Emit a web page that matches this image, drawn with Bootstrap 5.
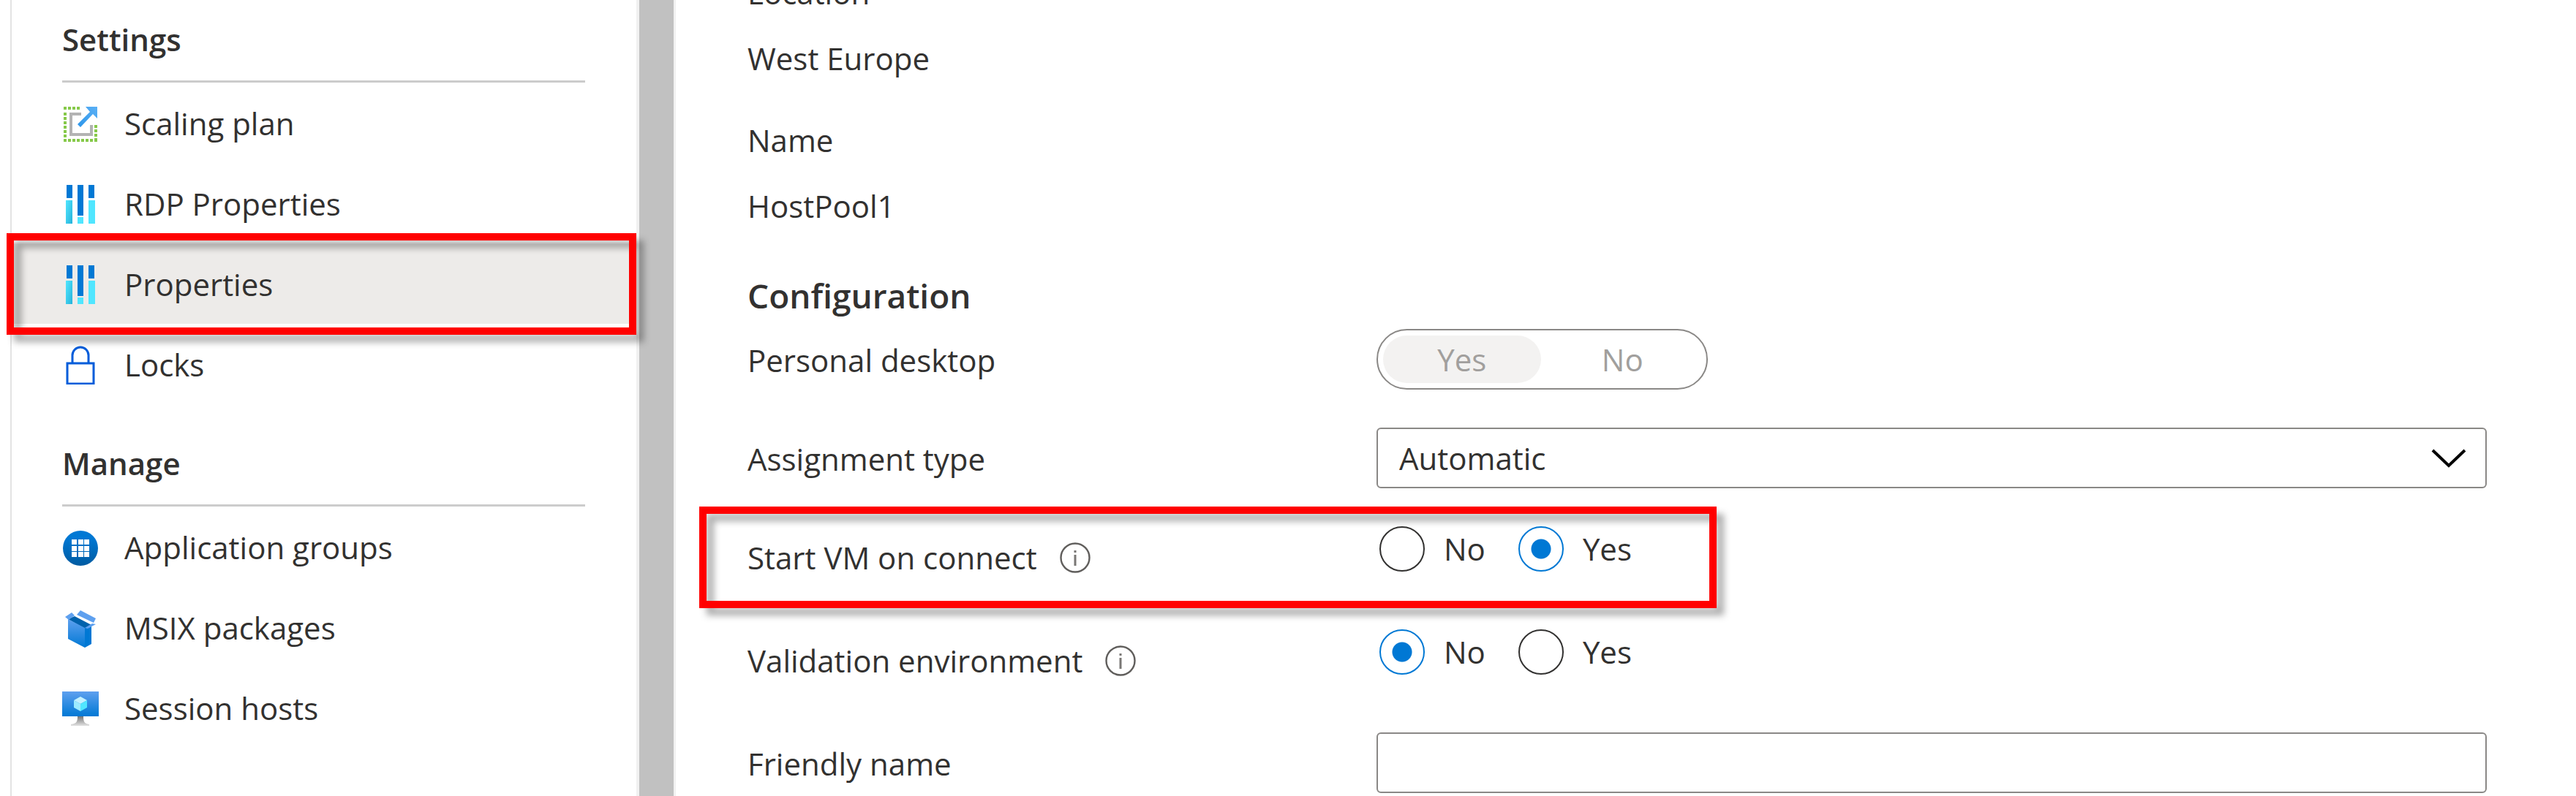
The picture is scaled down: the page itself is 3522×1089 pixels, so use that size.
<!DOCTYPE html>
<html lang="en">
<head>
<meta charset="utf-8">
<meta name="viewport" content="width=device-width, initial-scale=1">
<title>HostPool1 | Properties</title>
<link href="https://cdn.jsdelivr.net/npm/bootstrap@5.3.0/dist/css/bootstrap.min.css" rel="stylesheet">
<style>
  body { font-family: "Open Sans", "Noto Sans", sans-serif; font-size: 42px; line-height: 60px; color: #323130; background: #fff; }

  /* resource menu */
  .side-menu { width: 860px; margin-left: 14px; padding-top: 24px; border-left: 2px solid #e3e3e3; border-right: 4px solid #f1f1f1; }
  .menu-title { font-size: 42px; line-height: 60px; font-weight: 600; margin: 0 70px 0 69px; padding-bottom: 26px; border-bottom: 3px solid #ccc; }
  .menu-group + .menu-group { margin-top: 51px; }
  .side-menu .nav-link { height: 110px; padding: 2px 67px 0; gap: 33px; color: #323130; }
  .side-menu .nav-link.active { background: #edebe9; }
  .menu-icon { width: 54px; height: 54px; }
  .scroll-thumb { width: 50px; background: #c1c1c1; border-right: 3px solid #f1f1f1; }

  /* property sheet */
  .sheet { margin-top: -40px; padding: 0 122px 0 98px; }
  .essentials { margin: 0; }
  .essentials dt { font-weight: 400; margin-bottom: 30px; }
  .essentials dd { margin-bottom: 52px; }
  .sheet-title { font-size: 46px; line-height: 60px; font-weight: 600; margin: 62px 0 16px; }
  .prop-row { min-height: 83px; margin-bottom: 52px; }
  .prop-row.choice-row { min-height: 89px; }
  .prop-name { width: 860px; padding-top: 13px; gap: 31px; }
  .info-icon { width: 42px; height: 42px; }

  .pill-toggle { width: 453px; height: 83px; padding: 7px; gap: 4px; border: 2px solid #8a8886; border-radius: 42px; }
  .pill-toggle .btn { flex: 1; padding: 0; border: 0; border-radius: 33px; font-size: 42px; line-height: 60px; color: #a19f9d; opacity: 1; }
  .pill-toggle .btn.active { background: #f3f2f1; color: #a19f9d; }

  .sheet .form-control, .sheet .form-select { height: 83px; padding: 0 29px; border: 2px solid #8a8886; border-radius: 6px; font-size: 42px; line-height: 60px; color: #323130; background-color: #fff; }
  .sheet .form-select { background-image: url("data:image/svg+xml,%3Csvg xmlns='http://www.w3.org/2000/svg' viewBox='0 0 48 28'%3E%3Cpath d='M2 3l22 21L46 3' fill='none' stroke='%23000' stroke-width='4'/%3E%3C/svg%3E"); background-size: 48px 28px; background-position: right 26px center; }

  .choice-list { padding-left: 4px; gap: 45px; }
  .choice-list .form-check { min-height: 62px; padding: 0; margin: 0; gap: 26px; }
  .choice-list .form-check-input { width: 62px; height: 62px; margin: 0; border: 2px solid #323130; background: #fff; }
  .choice-list .form-check-input:checked { border-color: #0078d4; background: radial-gradient(circle, #0078d4 13px, #fff 14px); }

  /* call-out frames drawn over the page */
  .callout { position: absolute; z-index: 2; border: 10px solid #f00; filter: drop-shadow(10px 10px 5px rgba(0, 0, 0, .32)); pointer-events: none; }
  .callout-menu { inset: -14px 0 -15px -7px; }
  .callout-row { top: -27px; bottom: -23px; left: -66px; width: 1391px; }
</style>
</head>
<body>
<svg width="0" height="0" class="position-absolute" aria-hidden="true">
  <defs>
    <linearGradient id="cyan" x1="0" y1="0" x2="1" y2="1"><stop offset="0" stop-color="#50e6ff"/><stop offset="1" stop-color="#27b3da"/></linearGradient>
    <linearGradient id="disc" x1="0" y1="0" x2="0" y2="1"><stop offset="0.2" stop-color="#0078d4"/><stop offset="1" stop-color="#005ba1"/></linearGradient>
    <linearGradient id="face" x1="0" y1="0" x2="0" y2="1"><stop offset="0" stop-color="#5ea0ef"/><stop offset="1" stop-color="#0078d4"/></linearGradient>
    <linearGradient id="stand" x1="0" y1="0" x2="0" y2="1"><stop offset="0" stop-color="#767676"/><stop offset="1" stop-color="#e2e2e2"/></linearGradient>
    <linearGradient id="shaft" x1="0" y1="1" x2="1" y2="0"><stop offset="0" stop-color="#2b95ea"/><stop offset="1" stop-color="#5bb0f5"/></linearGradient>
    <symbol id="sliders" viewBox="0 0 54 54">
      <path fill="#0078d4" d="M8 1h8v18H8zM23 1h8v42h-8zM38 1h8v18h-8z"/>
      <path fill="url(#cyan)" d="M7 22h9v32H7z"/>
      <path fill="#50e6ff" d="M23 45h8v9h-8zM38 22h9v32h-9z"/>
    </symbol>
    <symbol id="info" viewBox="0 0 42 42">
      <circle cx="21" cy="21" r="19.5" fill="none" stroke="#605e5c" stroke-width="2.4"/>
      <path d="M21 17v15M21 11v3" stroke="#797775" stroke-width="3"/>
    </symbol>
  </defs>
</svg>

<div class="d-flex vh-100 overflow-hidden">
  <aside class="side-menu flex-shrink-0">
    <section class="menu-group">
      <h2 class="menu-title">Settings</h2>
      <nav class="nav flex-column" aria-label="Settings">
        <a class="nav-link d-flex align-items-center" href="#">
          <svg class="menu-icon" viewBox="0 0 54 54" aria-hidden="true">
            <path d="M4 6h23M6 12v40M4 50h46M48 29v20" fill="none" stroke="#86c94a" stroke-width="4" stroke-dasharray="4 2"/>
            <path d="M28 14H14v28h28V29" fill="none" stroke="#b3b3b3" stroke-width="4"/>
            <path d="M23 28L40 11 34 4h16v16l-6-6-17 18z" fill="url(#shaft)"/>
          </svg>Scaling plan</a>
        <a class="nav-link d-flex align-items-center" href="#">
          <svg class="menu-icon" aria-hidden="true"><use href="#sliders"/></svg>RDP Properties</a>
        <div class="position-relative">
          <a class="nav-link active d-flex align-items-center" href="#" aria-current="page">
            <svg class="menu-icon" aria-hidden="true"><use href="#sliders"/></svg>Properties</a>
          <div class="callout callout-menu"></div>
        </div>
        <a class="nav-link d-flex align-items-center" href="#">
          <svg class="menu-icon" viewBox="0 0 54 54" aria-hidden="true">
            <path d="M9 25h36v28H9zM16 25V14a11 11 0 0 1 22 0v11" fill="none" stroke="#015cda" stroke-width="3"/>
          </svg>Locks</a>
      </nav>
    </section>
    <section class="menu-group">
      <h2 class="menu-title">Manage</h2>
      <nav class="nav flex-column" aria-label="Manage">
        <a class="nav-link d-flex align-items-center" href="#">
          <svg class="menu-icon" viewBox="0 0 54 54" aria-hidden="true">
            <circle cx="27" cy="28" r="24" fill="url(#disc)"/>
            <path fill="#fff" d="M15 16h7v7h-7zM24 16h7v7h-7zM32 16h7v7h-7zM15 25h7v7h-7zM24 25h7v7h-7zM32 25h7v7h-7zM15 33h7v7h-7zM24 33h7v7h-7zM32 33h7v7h-7z"/>
          </svg>Application groups</a>
        <a class="nav-link d-flex align-items-center" href="#">
          <svg class="menu-icon" viewBox="0 0 54 54" aria-hidden="true">
            <path fill="#0062ad" d="M10 15l9-4 23 12-9 5z"/>
            <path fill="#5ea0ef" d="M27 3l21 11-3 6-23-11zM6 12l9-6 4 4-8 6z"/>
            <path fill="url(#face)" d="M10 15l23 12v27L10 42z"/>
            <path fill="#0078d4" d="M33 27l9-4v26l-9 5z"/>
            <path fill="#5ea0ef" d="M33 27l4 1 11-6-5-1z"/>
          </svg>MSIX packages</a>
        <a class="nav-link d-flex align-items-center" href="#">
          <svg class="menu-icon" viewBox="0 0 54 54" aria-hidden="true">
            <path fill="url(#stand)" d="M23 38h8c0 7 1 10 8 11v2H14v-2c8-1 9-4 9-11z"/>
            <rect x="2" y="4" width="50" height="34" fill="url(#face)"/>
            <path fill="#c3f1ff" d="M27 11l9 5-9 5-9-5z"/>
            <path fill="#9cebff" d="M18 16l9 5v10l-9-5z"/>
            <path fill="#50e6ff" d="M36 16l-9 5v10l9-5z"/>
          </svg>Session hosts</a>
      </nav>
    </section>
  </aside>
  <div class="scroll-thumb flex-shrink-0"></div>

  <main class="sheet flex-grow-1">
    <dl class="essentials">
      <dt>Location</dt>
      <dd>West Europe</dd>
      <dt>Name</dt>
      <dd>HostPool1</dd>
    </dl>
    <h2 class="sheet-title">Configuration</h2>

    <form>
      <div class="prop-row d-flex align-items-start">
        <div class="prop-name flex-shrink-0" id="personal">Personal desktop</div>
        <div class="pill-toggle d-flex" role="group" aria-labelledby="personal">
          <button type="button" class="btn active" disabled>Yes</button>
          <button type="button" class="btn" disabled>No</button>
        </div>
      </div>
      <div class="prop-row d-flex align-items-start">
        <label class="prop-name flex-shrink-0" for="assignment">Assignment type</label>
        <select class="form-select" id="assignment"><option selected>Automatic</option><option>Direct</option></select>
      </div>
      <div class="prop-row choice-row d-flex align-items-start position-relative">
        <div class="prop-name flex-shrink-0 d-flex align-items-center"><span id="start-vm">Start VM on connect</span>
          <svg class="info-icon" aria-hidden="true"><use href="#info"/></svg></div>
        <div class="choice-list d-flex" role="radiogroup" aria-labelledby="start-vm">
          <div class="form-check d-flex align-items-center"><input class="form-check-input" type="radio" name="startvm" id="startNo"><label for="startNo">No</label></div>
          <div class="form-check d-flex align-items-center"><input class="form-check-input" type="radio" name="startvm" id="startYes" checked><label for="startYes">Yes</label></div>
        </div>
        <div class="callout callout-row"></div>
      </div>
      <div class="prop-row choice-row d-flex align-items-start">
        <div class="prop-name flex-shrink-0 d-flex align-items-center"><span id="validation">Validation environment</span>
          <svg class="info-icon" aria-hidden="true"><use href="#info"/></svg></div>
        <div class="choice-list d-flex" role="radiogroup" aria-labelledby="validation">
          <div class="form-check d-flex align-items-center"><input class="form-check-input" type="radio" name="validation" id="validNo" checked><label for="validNo">No</label></div>
          <div class="form-check d-flex align-items-center"><input class="form-check-input" type="radio" name="validation" id="validYes"><label for="validYes">Yes</label></div>
        </div>
      </div>
      <div class="prop-row d-flex align-items-start mb-0">
        <label class="prop-name flex-shrink-0" for="friendly">Friendly name</label>
        <input class="form-control" type="text" id="friendly">
      </div>
    </form>
  </main>
</div>
<script src="https://cdn.jsdelivr.net/npm/bootstrap@5.3.0/dist/js/bootstrap.bundle.min.js"></script>
</body>
</html>
